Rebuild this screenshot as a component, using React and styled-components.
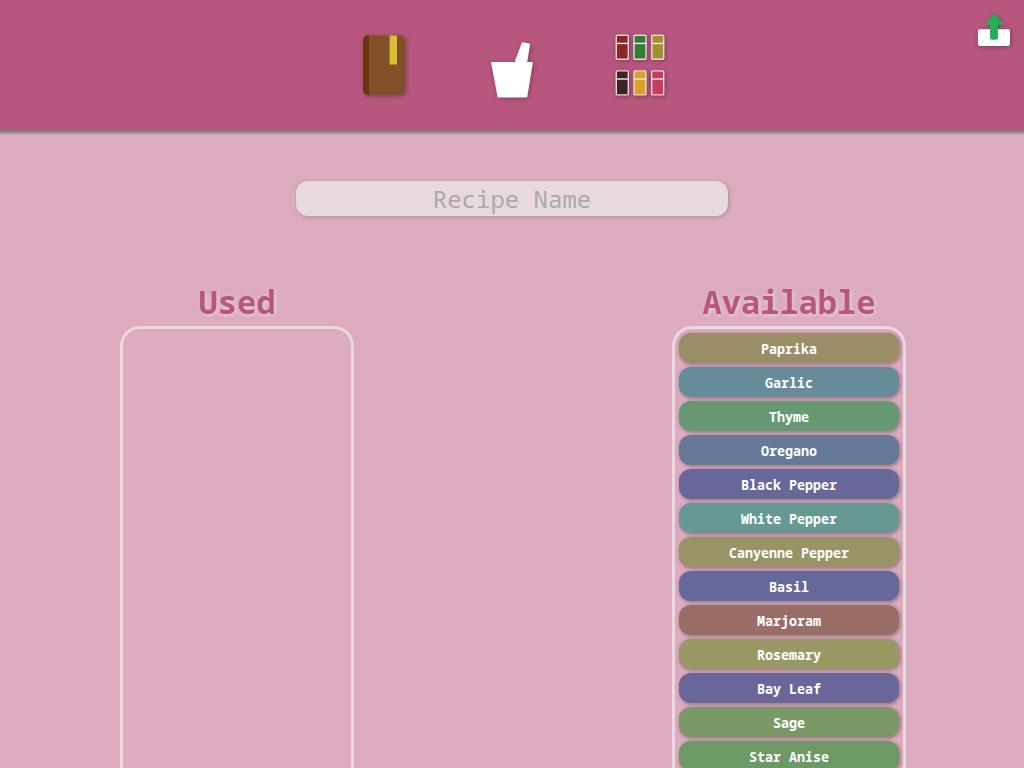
import React from "react";
import styled, { createGlobalStyle } from "styled-components";

const GlobalStyle = createGlobalStyle`
  *, *::before, *::after { box-sizing: border-box; }
  body {
    margin: 0;
    background: #dcabbf;
    font-family: "Noto Sans Mono", "Noto Mono", "Droid Sans Mono", "Open Sans Mono", "DejaVu Sans Mono", monospace;
  }
`;

const Page = styled.div`
  height: 100vh;
  overflow: hidden;
`;

const Header = styled.header`
  position: relative;
  height: 130px;
  background: #b7567e;
  box-shadow: 0 2px 3px 1px #777;
`;

const Nav = styled.nav`
  height: 100%;
  display: flex;
  justify-content: center;
  align-items: center;
  gap: 64px;
`;

const NavLink = styled.a`
  display: block;
  width: 64px;
  height: 64px;
`;

const Icon = styled.svg`
  display: block;
  width: 100%;
  height: 100%;
  overflow: visible;
  filter: drop-shadow(1px 1px 2px rgba(0, 0, 0, 0.3));
`;

const UploadButton = styled.button`
  position: absolute;
  top: 10px;
  right: 14px;
  width: 40px;
  height: 40px;
  padding: 0;
  border: 0;
  background: none;
`;

const Main = styled.main`
  display: flex;
  flex-direction: column;
  padding-top: 51px;
`;

const NameInput = styled.input`
  align-self: center;
  width: 432px;
  height: 35px;
  padding: 0 8px;
  border: 0;
  border-radius: 12px;
  background: #e8d9de;
  box-shadow: 1px 1px 4px rgba(0, 0, 0, 0.2);
  color: #666;
  font-family: inherit;
  font-size: 24px;
  text-align: center;
  &::placeholder { color: #a9a9a9; }
`;

const Columns = styled.div`
  display: flex;
  justify-content: space-between;
  padding: 64px 118px 0 120px;
`;

const Column = styled.section`
  width: 234px;
`;

const Title = styled.h2`
  margin: 0;
  height: 46px;
  color: #b7567e;
  font-size: 32px;
  line-height: 44px;
  text-align: center;
  text-shadow: 1px 1px 4px #e8d9de;
`;

const List = styled.ul`
  display: flex;
  flex-direction: column;
  gap: 4px;
  min-height: 640px;
  margin: 0;
  padding: 4px;
  border: 3px solid #e8d9de;
  border-radius: 20px;
  list-style: none;
`;

const Spice = styled.button`
  display: block;
  width: 100%;
  height: 30px;
  padding: 2px 0 0;
  border: 0;
  border-radius: 12px;
  background: ${(p) => p.$color};
  box-shadow: 1px 1px 3px 1px rgba(0, 0, 0, 0.25);
  color: #fff;
  font-family: inherit;
  font-weight: bold;
`;

const spices = [
  ["Paprika", "#998e66"],
  ["Garlic", "#668c99"],
  ["Thyme", "#669973"],
  ["Oregano", "#667999"],
  ["Black Pepper", "#666899"],
  ["White Pepper", "#669993"],
  ["Canyenne Pepper", "#999466"],
  ["Basil", "#666899"],
  ["Marjoram", "#996e66"],
  ["Rosemary", "#999966"],
  ["Bay Leaf", "#6b6699"],
  ["Sage", "#7a9966"],
  ["Star Anise", "#6c9966"],
];

const jars = [
  [7.6, 1.6, "#8f2626"],
  [25.3, 1.6, "#2f7d38"],
  [43, 1.6, "#a2912e"],
  [7.6, 37.2, "#3a2525"],
  [25.3, 37.2, "#d9a128"],
  [43, 37.2, "#c23e5b"],
];

function BookIcon() {
  return (
    <Icon viewBox="0 0 64 64" aria-hidden="true">
      <rect x="11" y="2.500" width="42" height="59.500" rx="5" fill="#825028" />
      <path d="M17 2.500H16a5 5 0 0 0-5 5v49.500a5 5 0 0 0 5 5h1z" fill="#693610" />
      <path d="M38 2.500h7v29h-7z" fill="#dcc031" />
      <path d="M37.200 2.500h1v29h-1z" fill="#b88e2b" />
    </Icon>
  );
}

function MortarIcon() {
  return (
    <Icon viewBox="0 0 64 64" aria-hidden="true" fill="#fff" stroke="#fff" strokeWidth="2" strokeLinejoin="round">
      <path d="M42.800 10.200L49 11.600 46.400 28H36z" />
      <path d="M12.200 30H51.800L46.300 63.500H18.500z" />
    </Icon>
  );
}

function JarsIcon() {
  return (
    <Icon viewBox="0 0 64 64" aria-hidden="true">
      {jars.map(([x, y, color]) => (
        <g key={color}>
          <rect x={x + 0.7} y={y + 0.7} width="12" height="24" rx="1" fill={color} stroke="#ecd6d8" strokeWidth="1.400" />
          <path d={`M${x} ${y + 8.8}h13.400`} stroke="#f3e8e6" strokeWidth="1.400" />
        </g>
      ))}
    </Icon>
  );
}

function UploadIcon() {
  return (
    <Icon viewBox="0 0 40 40" aria-hidden="true">
      <rect x="8" y="19.200" width="32" height="16.800" rx="2" fill="#fff" />
      <path d="M23 4.800Q24 3.800 25 4.800L33.600 14Q34 14.800 33 14.800H28V27.800q0 2-2 2H22q-2 0-2-2V14.800H15.500Q14.500 14.800 15 14z" fill="#22b056" />
    </Icon>
  );
}

function SpiceColumn({ title, items }) {
  return (
    <Column>
      <Title>{title}</Title>
      <List>
        {items.map(([name, color]) => (
          <li key={name}>
            <Spice type="button" $color={color}>{name}</Spice>
          </li>
        ))}
      </List>
    </Column>
  );
}

export default function App() {
  return (
    <Page>
      <GlobalStyle />
      <Header>
        <Nav>
          <NavLink href="#recipes" aria-label="Recipes"><BookIcon /></NavLink>
          <NavLink href="#mix" aria-label="Mix"><MortarIcon /></NavLink>
          <NavLink href="#spices" aria-label="Spices"><JarsIcon /></NavLink>
        </Nav>
        <UploadButton type="button" aria-label="Upload"><UploadIcon /></UploadButton>
      </Header>
      <Main>
        <NameInput type="text" placeholder="Recipe Name" aria-label="Recipe Name" />
        <Columns>
          <SpiceColumn title="Used" items={[]} />
          <SpiceColumn title="Available" items={spices} />
        </Columns>
      </Main>
    </Page>
  );
}
